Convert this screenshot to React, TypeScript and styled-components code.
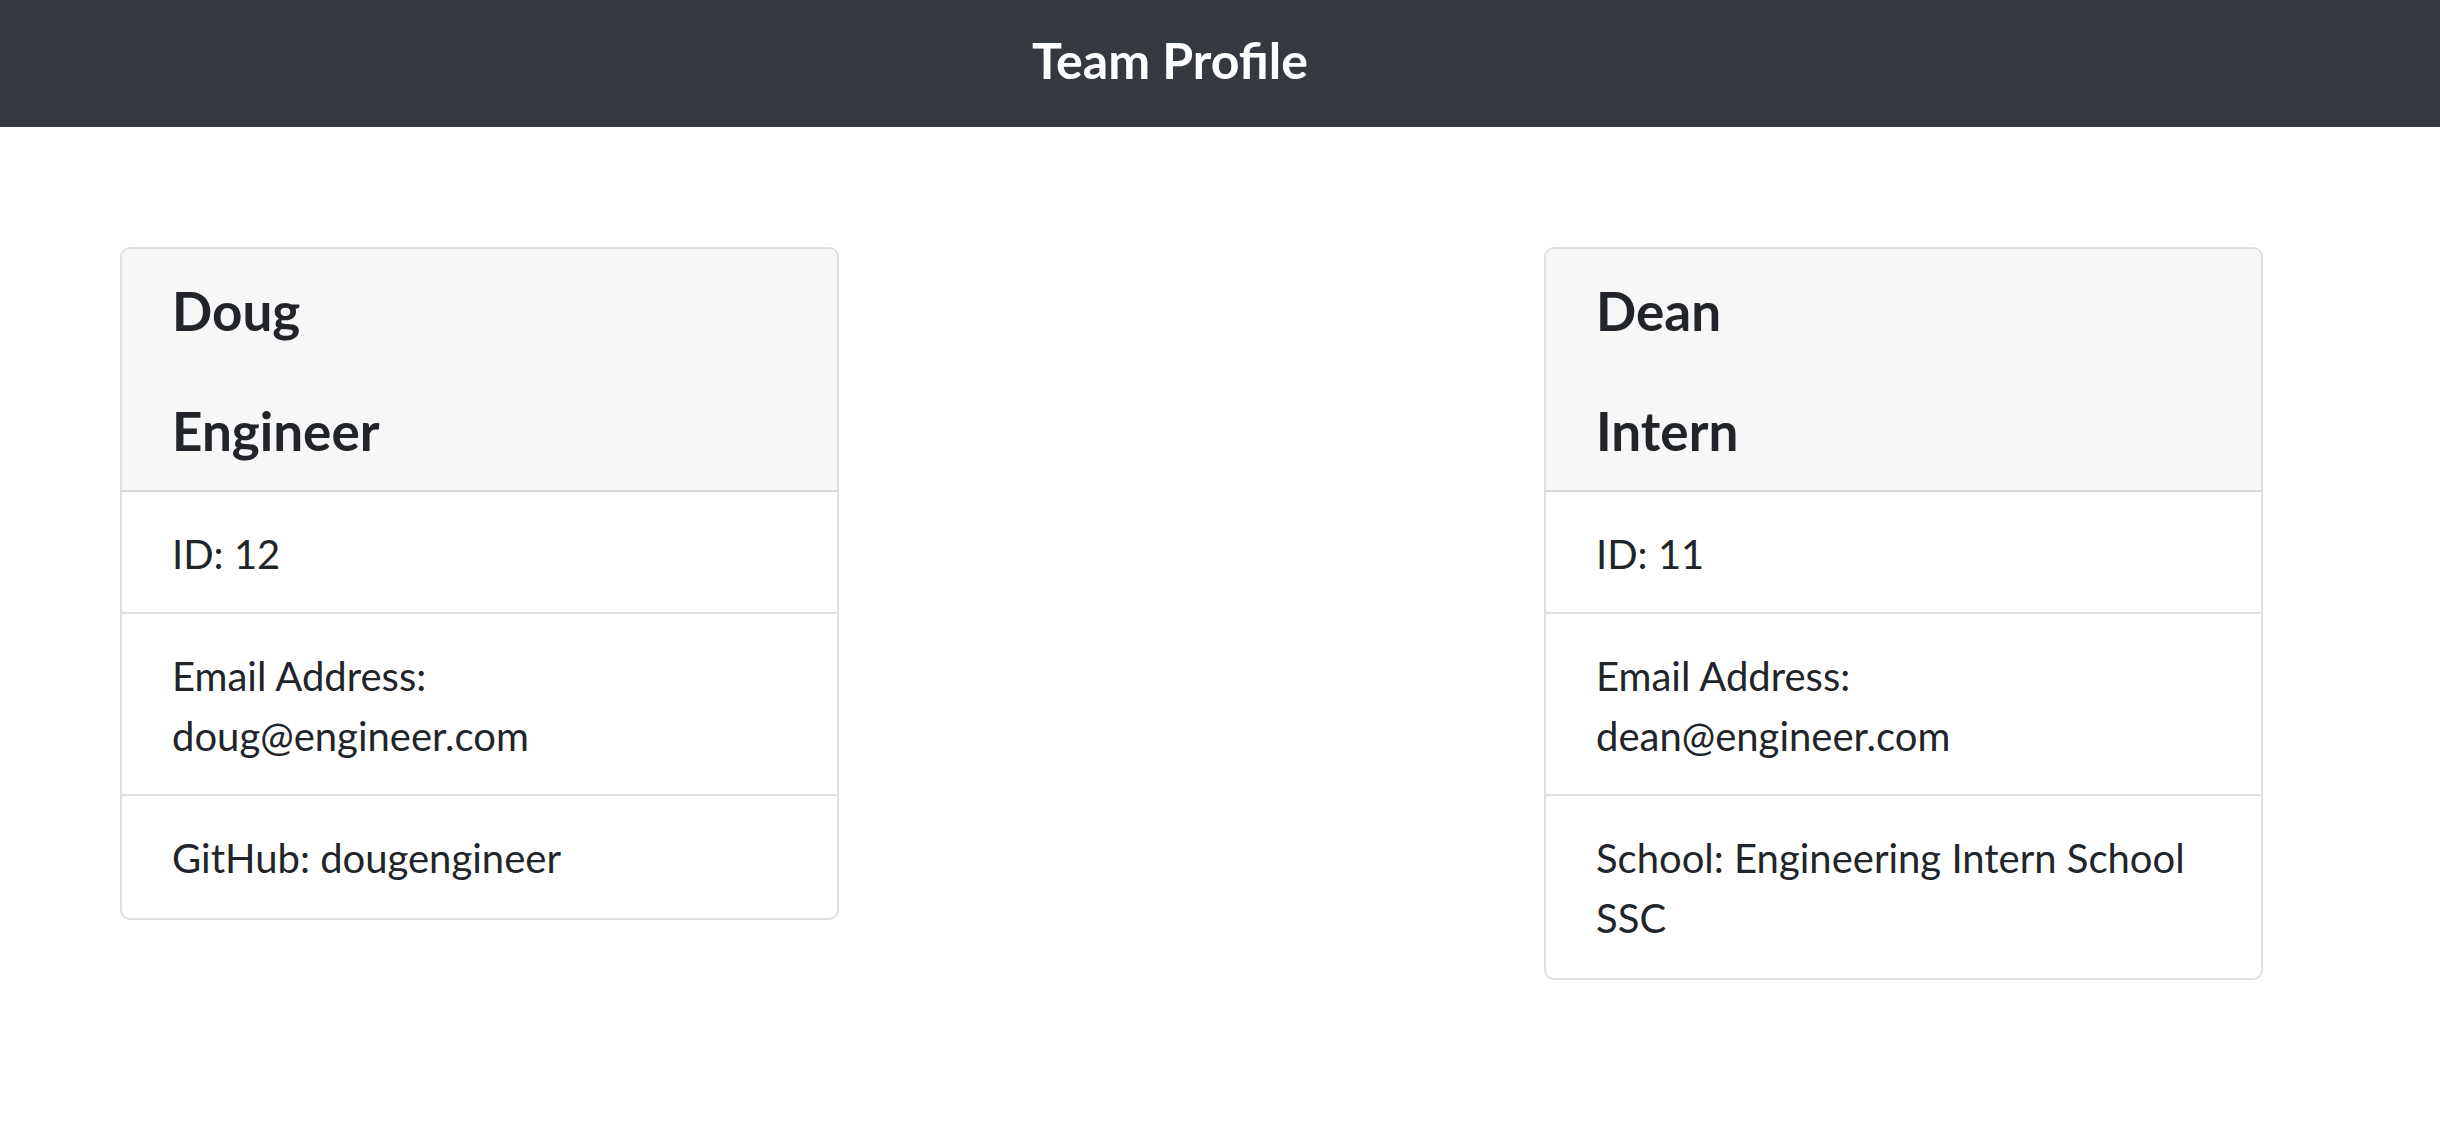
import React from "react";
import styled, { createGlobalStyle } from "styled-components";

const GlobalStyle = createGlobalStyle`
  html, body {
    margin: 0;
    padding: 0;
    background: #ffffff;
  }
  body {
    font-family: Lato, "Open Sans", "Noto Sans", sans-serif;
    color: #212529;
  }
  * { box-sizing: border-box; }
`;

const TopBar = styled.header`
  height: 127px;
  background: #343a40;
  display: flex;
  justify-content: center;
  align-items: flex-start;
  padding: 30px 100px 0 0;
`;

const Title = styled.h1`
  margin: 0;
  font-size: 50px;
  line-height: 60px;
  font-weight: 700;
  color: #ffffff;
`;

const Main = styled.main`
  display: grid;
  grid-template-columns: 719px 719px;
  column-gap: 705px;
  align-items: start;
  padding: 120px 0 0 120px;
`;

const Card = styled.section`
  display: flex;
  flex-direction: column;
  border: 2px solid rgba(0, 0, 0, 0.125);
  border-radius: 10px;
  background: #ffffff;
  overflow: hidden;
`;

const CardHeader = styled.div`
  background: #f7f7f7;
  padding: 30px 50px 27px;
  border-bottom: 2px solid rgba(0, 0, 0, 0.125);
  display: flex;
  flex-direction: column;
  gap: 56px;
`;

const HeaderLine = styled.h2`
  margin: 0;
  font-size: 53px;
  line-height: 64px;
  font-weight: 700;
  color: #212529;
`;

const ItemList = styled.ul`
  list-style: none;
  margin: 0;
  padding: 0;
`;

const Item = styled.li`
  padding: 32px 50px 28px;
  font-size: 40px;
  line-height: 60px;
  font-weight: 400;
  color: #212529;
  & + & {
    border-top: 2px solid rgba(0, 0, 0, 0.125);
  }
  &:last-child {
    padding-bottom: 30px;
  }
`;

type Member = {
  name: string;
  role: string;
  id: number;
  email: string;
  extraLabel: string;
  extraValue: string;
};

const members: Member[] = [
  {
    name: "Doug",
    role: "Engineer",
    id: 12,
    email: "doug@engineer.com",
    extraLabel: "GitHub",
    extraValue: "dougengineer",
  },
  {
    name: "Dean",
    role: "Intern",
    id: 11,
    email: "dean@engineer.com",
    extraLabel: "School",
    extraValue: "Engineering Intern School SSC",
  },
];

const MemberCard = ({ m }: { m: Member }) => (
  <Card>
    <CardHeader>
      <HeaderLine>{m.name}</HeaderLine>
      <HeaderLine>{m.role}</HeaderLine>
    </CardHeader>
    <ItemList>
      <Item>ID: {m.id}</Item>
      <Item>Email Address: {m.email}</Item>
      <Item>
        {m.extraLabel}: {m.extraValue}
      </Item>
    </ItemList>
  </Card>
);

export default function App() {
  return (
    <>
      <GlobalStyle />
      <TopBar>
        <Title>Team Profile</Title>
      </TopBar>
      <Main>
        {members.map((m) => (
          <MemberCard key={m.id} m={m} />
        ))}
      </Main>
    </>
  );
}
